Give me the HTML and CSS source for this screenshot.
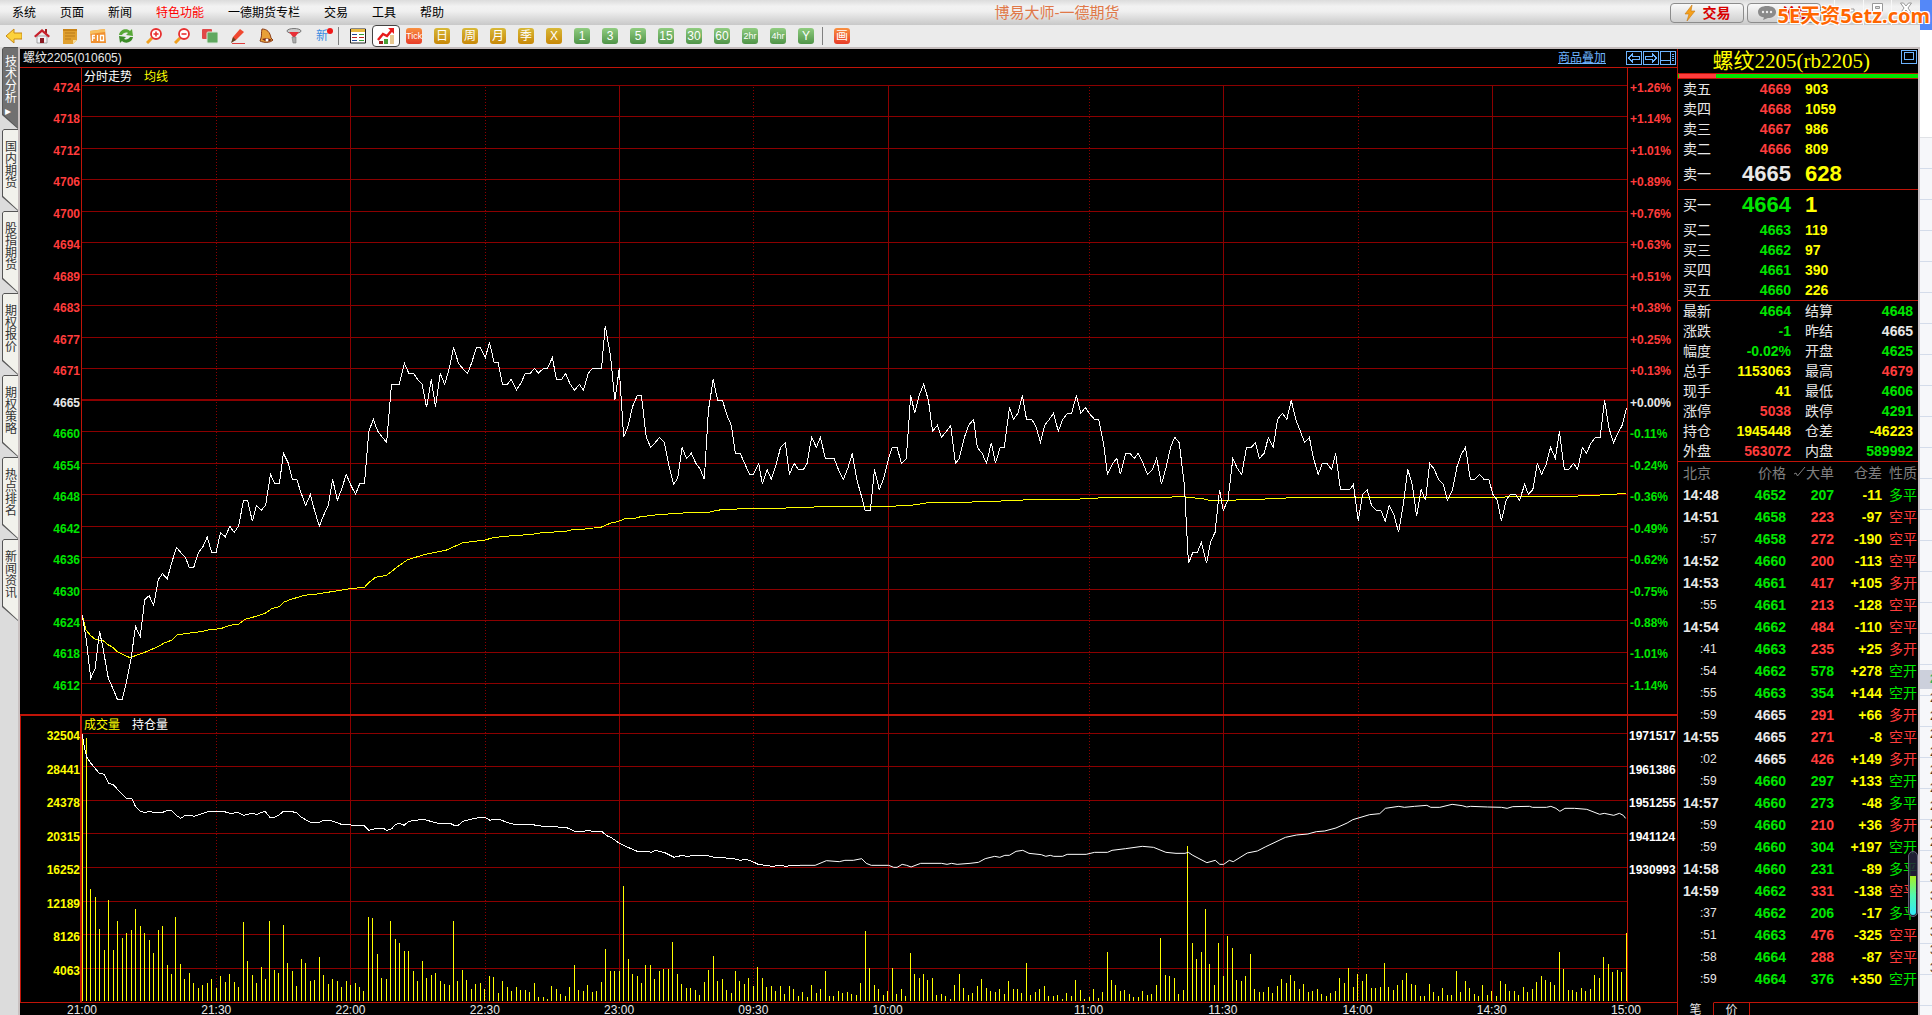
FILE: index.html
```html
<!DOCTYPE html>
<html lang="zh-CN">
<head>
<meta charset="utf-8">
<title>博易大师-一德期货</title>
<link rel="stylesheet" href="styles.css">
</head>
<body>
<div class="app">
  <header class="menubar">
    <nav class="menu">
      <button>系统</button><button>页面</button><button>新闻</button><button class="hot">特色功能</button><button>一德期货专栏</button><button>交易</button><button>工具</button><button>帮助</button>
    </nav>
    <h1 class="app-title">博易大师-一德期货</h1>
    <div class="quick">
      <button class="pill"><svg width="12" height="16" viewBox="0 0 12 16"><path d="M8 0 1 9h4L3 16l8-10H7z" fill="#f5a01c" stroke="#c87810" stroke-width=".6"/></svg>交易</button>
      <button class="pill"><svg width="18" height="14" viewBox="0 0 18 14"><path d="M9 0c5 0 9 2 9 6s-4 6-8 6l-5 2 1-2.500C2 11 0 9 0 6c0-4 4-6 9-6z" fill="#8a8a8a"/><g fill="#eee"><circle cx="5" cy="6" r="1.200"/><circle cx="9" cy="6" r="1.200"/><circle cx="13" cy="6" r="1.200"/></g></svg>论坛</button>
    </div>
    <div class="window-buttons">
      <button aria-label="最小化"><svg width="14" height="12" viewBox="0 0 14 12"><path d="M2 7h10v3H2z" fill="#fff" stroke="#999"/></svg></button>
      <button aria-label="还原"><svg width="14" height="12" viewBox="0 0 14 12"><path d="M1.500 1.500h10v8h-10z" fill="#fff" stroke="#999"/><path d="M4.500 4.500h4v2h-4z" fill="#ddd" stroke="#999"/></svg></button>
      <button aria-label="关闭"><svg width="14" height="12" viewBox="0 0 14 12"><path d="M1.500 1h3L7 4l2.500-3h3L9 6l3.500 5h-3L7 8l-2.500 3h-3L5 6z" fill="#fff" stroke="#999"/></svg></button>
    </div>
  </header>

  <div class="toolbar" role="toolbar">
    <button aria-label="后退"><svg width="16" height="16" viewBox="0 0 16 16"><path d="M0 8l8-7v4h8v6H8v4z" fill="#fcd23c" stroke="#c88a14"/></svg></button>
    <button aria-label="首页"><svg width="16" height="16" viewBox="0 0 16 16"><path d="M3 8h10v7H3z" fill="#f2f2f6" stroke="#888" stroke-width=".7"/><path d="M11 1h2v4h-2z" fill="#a02020"/><path d="M0 8l8-7 8 7-1.500 1.500L8 4 1.500 9.500z" fill="#c8202c"/><path d="M6 10h4v5H6z" fill="#8a1c24"/></svg></button>
    <button aria-label="记事"><svg width="16" height="16" viewBox="0 0 16 16"><path d="M1 1h14v11l-4 4H1z" fill="#e0a030"/><path d="M1 1h14v2H1z" fill="#c98418"/><path d="M3 5h10M3 8h10M3 11h6" stroke="#b87a1c"/><path d="M11 16v-4h4z" fill="#f8dc98"/></svg></button>
    <button aria-label="F10"><svg width="16" height="16" viewBox="0 0 16 16"><path d="M0 3l15-2 1 14H1z" fill="#f09030"/><path d="M0 3l15-2v3L0 6z" fill="#f8c060"/><path d="M2.500 13V7.500H5M2.500 10H5M7.500 7v6M10.500 7.500h3v5h-3z" fill="none" stroke="#fff" stroke-width="1.300"/></svg></button>
    <button aria-label="刷新"><svg width="16" height="16" viewBox="0 0 16 16"><path d="M1 7c1-6 8-7 11-4l2-2 1 7-7-1 2-2C8 4 5 5 4 7z" fill="#58a838"/><path d="M15 9c-1 6-8 7-11 4l-2 2-1-7 7 1-2 2c2 1 5 0 6-2z" fill="#3c8c28"/></svg></button>
    <button aria-label="放大"><svg width="16" height="16" viewBox="0 0 16 16"><path d="M6 10l-5 5" stroke="#f0a020" stroke-width="3"/><circle cx="10" cy="6" r="5" fill="#fff" stroke="#e83030" stroke-width="1.800"/><path d="M7.500 6h5M10 3.500v5" stroke="#e83030" stroke-width="1.600"/></svg></button>
    <button aria-label="缩小"><svg width="16" height="16" viewBox="0 0 16 16"><path d="M6 10l-5 5" stroke="#f0a020" stroke-width="3"/><circle cx="10" cy="6" r="5" fill="#fff" stroke="#e83030" stroke-width="1.800"/><path d="M7.500 6h5" stroke="#e83030" stroke-width="1.600"/></svg></button>
    <button aria-label="叠加"><svg width="16" height="16" viewBox="0 0 16 16"><rect x="0" y="1" width="10" height="10" rx="1" fill="#e04848"/><rect x="5" y="4" width="11" height="11" rx="1" fill="#60a860" stroke="#d8e8d8"/></svg></button>
    <button aria-label="画线"><svg width="16" height="16" viewBox="0 0 16 16"><path d="M3 9l7-8 4 3-8 8-4 1z" fill="#f04830"/><path d="M3 9l3 3-5 3z" fill="#684020"/><path d="M2 15.500h13" stroke="#e04040"/></svg></button>
    <button aria-label="预警"><svg width="16" height="16" viewBox="0 0 16 16"><path d="M4 1c5 0 8 3 9 9l2 2c-3 3-9 3-13 1l1-3c1-3 0-5 1-9z" fill="#e8a038" stroke="#8a3c18"/><path d="M4 11c3-1 7-1 10 1-3 2-7 2-10-1z" fill="#7a2818"/><circle cx="9" cy="12" r="1.500" fill="#fff"/></svg></button>
    <button aria-label="筛选"><svg width="16" height="16" viewBox="0 0 16 16"><ellipse cx="8" cy="3" rx="7" ry="2.500" fill="#ccc" stroke="#777"/><path d="M3 4h10l-4 5H7z" fill="#e83038"/><path d="M6 9h4v6H7z" fill="#aaa" stroke="#777" stroke-width=".6"/></svg></button>
    <button class="new-item">新<i></i></button>
    <span class="divider"></span>
    <button aria-label="报价"><svg width="16" height="16" viewBox="0 0 16 16"><path d="M.5 1h15v14H.5z" fill="#fff" stroke="#222"/><path d="M1 1h14v3H1z" fill="#e8b840"/><path d="M2 6.500h5M2 12.500h5" stroke="#204898"/><path d="M2 9.500h5" stroke="#c02020"/><path d="M9 6.500h5M9 12.500h5" stroke="#30a030"/><path d="M9 9.500h5" stroke="#c02020"/></svg></button>
    <button class="active" aria-label="分时"><svg width="18" height="18" viewBox="0 0 18 18"><path d="M2 14h4v3H2z" fill="#a02020"/><path d="M7 12h4v5H7z" fill="#48a038"/><path d="M13 8h4v9h-4z" fill="#e8c890"/><path d="M1 13l5-6 4 2 5-6" fill="none" stroke="#e81c1c" stroke-width="2.500"/><path d="M11 1h6v6z" fill="#e81c1c"/></svg></button>
    <button><b class="chip red narrow">Tick</b></button>
    <button><b class="chip gold">日</b></button>
    <button><b class="chip gold">周</b></button>
    <button><b class="chip gold">月</b></button>
    <button><b class="chip gold">季</b></button>
    <button><b class="chip gold">X</b></button>
    <button><b class="chip green">1</b></button>
    <button><b class="chip green">3</b></button>
    <button><b class="chip green">5</b></button>
    <button><b class="chip green">15</b></button>
    <button><b class="chip green">30</b></button>
    <button><b class="chip green">60</b></button>
    <button><b class="chip green narrow">2hr</b></button>
    <button><b class="chip green narrow">4hr</b></button>
    <button><b class="chip green">Y</b></button>
    <span class="divider"></span>
    <button><b class="chip red">画</b></button>
  </div>

  <div class="workspace">
    <nav class="rail">
      <button class="tab current"><span>技术分析</span><i>▸</i></button>
      <button class="tab"><span>国内期货</span></button>
      <button class="tab"><span>股指期货</span></button>
      <button class="tab"><span>期权报价</span></button>
      <button class="tab"><span>期权策略</span></button>
      <button class="tab"><span>热点排名</span></button>
      <button class="tab"><span>新闻资讯</span></button>
    </nav>

    <main class="chart">
      <div class="chart-head">
        <span>螺纹2205(010605)</span>
        <a href="#">商品叠加</a>
        <div class="head-icons">
          <button aria-label="前一品种"><svg width="16" height="14" viewBox="0 0 16 14"><path d="M.5.5h15v13H.5zM2.500 7l4-4v2.500h7v3h-7V11z"/></svg></button>
          <button aria-label="后一品种"><svg width="16" height="14" viewBox="0 0 16 14"><path d="M.5.5h15v13H.5zM13.500 7l-4-4v2.500h-7v3h7V11z"/></svg></button>
          <button aria-label="布局"><svg width="16" height="14" viewBox="0 0 16 14"><path d="M.5.5h15v13H.5zM10.500 1v12M1 9.500h9M12 3.500h2M12 5.500h2M12 7.500h2M12 9.500h2"/></svg></button>
        </div>
      </div>

      <div class="pane price">
        <ol class="axis left">
          <li>4724</li><li>4718</li><li>4712</li><li>4706</li><li>4700</li><li>4694</li><li>4689</li><li>4683</li><li>4677</li><li>4671</li><li class="w">4665</li><li class="g">4660</li><li class="g">4654</li><li class="g">4648</li><li class="g">4642</li><li class="g">4636</li><li class="g">4630</li><li class="g">4624</li><li class="g">4618</li><li class="g">4612</li>
        </ol>
        <div class="plot">
          <div class="legend"><span>分时走势</span><span class="y">均线</span></div>
          <svg viewBox="82 68 1545 646" preserveAspectRatio="none" shape-rendering="crispEdges">
            <path class="grid" d="M82 85.500H1627M82 116.500H1627M82 148.500H1627M82 179.500H1627M82 211.500H1627M82 242.500H1627M82 274.500H1627M82 305.500H1627M82 337.500H1627M82 368.500H1627M82 431.500H1627M82 463.500H1627M82 494.500H1627M82 526.500H1627M82 557.500H1627M82 589.500H1627M82 620.500H1627M82 652.500H1627M82 683.500H1627M350.500 85V716M619.500 85V716M888.500 85V716M1223.500 85V716M1492.500 85V716"/>
            <path class="grid base" d="M82 400H1627"/>
            <path class="grid dots" d="M216.500 87V716M485.500 87V716M753.500 87V716M1089.500 87V716M1358.500 87V716"/>
            <g transform="translate(60 300) scale(.3699 .33333)">
              <polyline class="avg" points="60,945 70,990 83,1007 95,1018 118,1023 131,1035 143,1042 155,1055 180,1069 190,1073 204,1067 229,1057 265,1040 280,1030 303,1020 318,1004 345,1000 380,995 405,989 435,986 458,976 483,973 500,958 530,949 556,939 572,926 592,920 606,906 625,898 660,886 695,882 740,874 785,866 823,862 835,848 853,832 883,826 915,798 940,779 985,764 1045,750 1065,740 1090,728 1150,720 1170,713 1215,708 1275,703 1305,698 1368,694 1385,689 1420,687 1465,681"/>
              <polyline class="last" points="60,945 70,1010 83,1135 95,1105 107,994 118,1055 131,1137 143,1165 155,1198 168,1198 180,1145 192,1078 204,979 217,1010 229,899 241,887 253,916 266,838 277,821 290,837 302,788 315,742 327,758 339,772 350,804 361,804 374,758 386,741 398,711 410,757 422,757 434,697 447,711 459,679 471,697 483,678 496,601 507,601 520,664 531,616 544,631 556,615 569,523 581,552 593,552 604,460 617,489 628,537 640,538 652,580 664,616 677,584 688,631 701,679 713,645 725,617 737,538 750,601 762,565 774,523 786,555 799,583 810,552 823,552 835,394 847,358 859,394 871,411 883,427 896,254 917,254 931,190 943,220 956,220 967,239 979,253 991,322 1004,238 1015,322 1028,221 1040,253 1052,207 1064,142 1077,189 1089,206 1102,220 1113,188 1126,142 1136,142 1150,173 1161,127 1174,189 1185,189 1196,253 1209,253 1220,238 1234,270 1246,250 1258,220 1271,220 1283,205 1293,220 1307,205 1318,205 1331,173 1342,238 1356,238 1367,221 1379,252 1391,271 1404,253 1415,271 1428,220 1440,205 1464,205 1474,78 1488,165 1500,301 1512,205"/>
            </g>
            <g transform="translate(600 300) scale(.3699 .33333)">
              <polyline class="avg" points="4,681 27,670 50,664 65,657 95,655 110,650 150,645 195,641 240,638 295,637 315,631 340,628 400,626 505,624 605,620 780,619 840,616 895,607 1010,606 1110,602 1160,599 1280,598 1365,593 1535,592 1567,589"/>
              <polyline class="last" points="52,205 64,411 76,378 88,320 101,286 112,286 125,411 137,442 149,428 161,412 174,427 185,490 199,553 210,535 222,443 234,475 247,460 259,490 271,508 282,538 293,332 306,238 318,301 331,301 343,345 355,376 366,460 379,460 391,490 404,523 415,523 429,490 439,553 452,509 463,538 477,490 488,443 501,428 512,523 525,490 536,508 550,508 560,490 572,412 585,442 596,412 609,475 633,475 645,510 658,538 670,505 682,460 694,538 706,585 717,631 731,631 742,508 755,569 767,535 779,480 790,442 803,442 815,490 828,476 840,286 851,340 863,285 875,253 888,301 899,394 912,376 923,412 936,395 948,376 961,490 971,476 985,412 997,375 1010,358 1020,442 1033,460 1045,490 1058,428 1069,490 1082,442 1093,442 1107,322 1118,358 1130,339 1142,286 1153,358 1167,358 1178,378 1191,427 1202,376 1214,359 1226,340 1239,394 1251,358 1263,341 1275,340 1288,286 1300,340 1312,322 1324,342 1337,358 1348,358 1361,428 1372,523 1385,492 1397,475 1407,523 1421,460 1432,460 1445,475 1455,460 1468,490 1480,523 1493,509 1505,475 1518,553"/>
            </g>
            <g transform="translate(1130 300) scale(.3699 .33333)">
              <polyline class="avg" points="133,589 150,591 200,597 215,601 283,601 295,598 368,597 440,593 950,592 1215,588 1290,584 1342,580"/>
              <polyline class="last" points="85,553 98,500 110,440 121,412 133,428 147,555 158,790 170,757 182,757 193,727 207,790 218,725 230,697 242,569 252,631 265,600 278,475 290,505 302,523 315,442 328,442 339,428 350,475 363,460 374,412 387,442 399,358 412,340 424,358 436,301 448,358 460,392 472,428 485,412 496,475 509,523 520,490 532,490 545,508 556,460 569,569 594,569 604,553 617,663 629,583 641,569 653,616 666,631 678,631 690,663 701,616 714,646 726,697 738,620 751,508 763,553 775,649 787,569 799,601 810,490 822,507 834,538 847,553 858,601 872,569 884,500 896,462 907,442 920,538 932,538 945,523 957,538 970,538 981,583 993,601 1004,663 1017,601 1028,583 1042,583 1053,601 1067,553 1077,583 1089,569 1101,490 1113,523 1125,493 1137,442 1150,475 1161,394 1174,508 1186,508 1199,490 1210,508 1223,442 1234,460 1246,430 1258,412 1271,412 1283,301 1295,385 1307,428 1319,400 1331,375 1342,325"/>
            </g>
          </svg>
        </div>
        <ol class="axis right">
          <li>+1.26%</li><li>+1.14%</li><li>+1.01%</li><li>+0.89%</li><li>+0.76%</li><li>+0.63%</li><li>+0.51%</li><li>+0.38%</li><li>+0.25%</li><li>+0.13%</li><li class="w">+0.00%</li><li class="g">-0.11%</li><li class="g">-0.24%</li><li class="g">-0.36%</li><li class="g">-0.49%</li><li class="g">-0.62%</li><li class="g">-0.75%</li><li class="g">-0.88%</li><li class="g">-1.01%</li><li class="g">-1.14%</li>
        </ol>
      </div>

      <div class="pane volume">
        <ol class="axis left">
          <li>32504</li><li>28441</li><li>24378</li><li>20315</li><li>16252</li><li>12189</li><li>8126</li><li>4063</li>
        </ol>
        <div class="plot">
          <div class="legend"><span class="y">成交量</span><span>持仓量</span></div>
          <svg viewBox="82 716 1545 286" preserveAspectRatio="none" shape-rendering="crispEdges">
            <path class="grid" d="M82 733.500H1627M82 766.500H1627M82 800.500H1627M82 833.500H1627M82 867.500H1627M82 901.500H1627M82 934.500H1627M82 968.500H1627M350.500 716V1002M619.500 716V1002M888.500 716V1002M1223.500 716V1002M1492.500 716V1002"/>
            <path class="grid dots" d="M216.500 717V1002M485.500 717V1002M753.500 717V1002M1089.500 717V1002M1358.500 717V1002"/>
            <path id="volume-bars" class="bars"/>
            <g transform="translate(20 700) scale(.5102 .33333)">
              <polyline class="last" points="122,103 126,140 131,172 138,188 155,219 165,223 174,250 183,254 200,283 209,295 219,295 226,318 236,334 245,338 253,334 262,337 280,337 289,331 297,331 307,347 315,355 324,346 334,346 342,349 358,340 372,334 398,334 412,340 428,338 438,346 455,340 464,343 480,334 490,352 498,352 507,346 516,334 530,334 542,338 552,352 569,367 586,367 595,361 608,361 630,373 675,378 684,391 700,385 712,385 719,391 728,387 736,373 744,370 753,376 762,364 790,358 820,370 843,370 851,376 859,376 868,364 880,359 900,353 912,352 921,361 930,358 939,358 960,370 970,373 1000,373 1025,379 1070,382 1088,394 1105,394 1114,391 1122,394 1140,394 1150,407 1160,414 1175,430 1190,441 1210,454 1230,454 1237,457 1246,451 1265,459 1282,472 1298,466 1307,469 1325,466 1345,466 1360,472 1395,475 1412,481 1420,478 1432,482 1447,493 1475,499 1490,496 1500,499 1515,496 1529,496"/>
            </g>
            <g transform="translate(800 700) scale(.5612 .33333)">
              <polyline class="last" points="0,496 27,496 47,482 70,485 80,481 95,481 110,476 118,490 127,496 158,496 167,502 173,502 182,493 190,496 198,501 215,490 252,490 262,493 270,490 280,493 303,490 318,487 330,476 347,469 356,472 365,466 373,466 385,454 397,451 408,460 430,464 438,469 446,466 452,469 468,469 476,463 510,463 525,457 548,457 556,451 580,446 610,439 630,442 652,457 670,460 686,460 692,457 700,466 725,488 740,481 748,493 755,493 765,481 772,485 797,459 815,453 830,440 865,412 885,405 905,402 920,395 935,393 955,384 975,369 985,359 1015,344 1033,341 1043,325 1067,319 1077,322 1095,319 1117,316 1124,322 1140,322 1162,313 1180,317 1188,321 1195,319 1225,321 1250,322 1260,325 1270,320 1300,319 1305,322 1330,322 1338,319 1347,325 1354,334 1363,325 1380,325 1402,328 1425,343 1433,340 1450,346 1460,340 1467,346 1471,355"/>
            </g>
          </svg>
        </div>
        <ol class="axis right">
          <li>1971517</li><li>1961386</li><li>1951255</li><li>1941124</li><li>1930993</li><li></li><li></li><li></li>
        </ol>
      </div>

      <div class="times">
        <span>21:00</span><span>21:30</span><span>22:00</span><span>22:30</span><span>23:00</span><span>09:30</span><span>10:00</span><span>11:00</span><span>11:30</span><span>14:00</span><span>14:30</span><span>15:00</span>
      </div>
    </main>

    <aside class="quote">
      <div class="quote-head">
        <h2>螺纹2205(rb2205)</h2>
        <button aria-label="窗口"><svg width="16" height="14" viewBox="0 0 16 14"><path d="M.5.5h15v13H.5zM3.500 2.500h9v7h-9z"/></svg></button>
      </div>
      <div class="ratio"><span></span></div>
      <table class="depth">
        <tr><th>卖五</th><td class="r">4669</td><td>903</td></tr>
        <tr><th>卖四</th><td class="r">4668</td><td>1059</td></tr>
        <tr><th>卖三</th><td class="r">4667</td><td>986</td></tr>
        <tr><th>卖二</th><td class="r">4666</td><td>809</td></tr>
        <tr class="best"><th>卖一</th><td class="w">4665</td><td>628</td></tr>
      </table>
      <table class="depth">
        <tr class="best"><th>买一</th><td class="g">4664</td><td>1</td></tr>
        <tr><th>买二</th><td class="g">4663</td><td>119</td></tr>
        <tr><th>买三</th><td class="g">4662</td><td>97</td></tr>
        <tr><th>买四</th><td class="g">4661</td><td>390</td></tr>
        <tr><th>买五</th><td class="g">4660</td><td>226</td></tr>
      </table>
      <table class="stats">
        <tr><th>最新</th><td class="g">4664</td><th>结算</th><td class="g">4648</td></tr>
        <tr><th>涨跌</th><td class="g">-1</td><th>昨结</th><td class="w">4665</td></tr>
        <tr><th>幅度</th><td class="g">-0.02%</td><th>开盘</th><td class="g">4625</td></tr>
        <tr><th>总手</th><td>1153063</td><th>最高</th><td class="r">4679</td></tr>
        <tr><th>现手</th><td>41</td><th>最低</th><td class="g">4606</td></tr>
        <tr><th>涨停</th><td class="r">5038</td><th>跌停</th><td class="g">4291</td></tr>
        <tr><th>持仓</th><td>1945448</td><th>仓差</th><td>-46223</td></tr>
        <tr><th>外盘</th><td class="r">563072</td><th>内盘</th><td class="g">589992</td></tr>
      </table>
      <table class="ticks">
        <thead><tr><th>北京</th><th>价格</th><th><svg width="12" height="12" viewBox="0 0 12 12"><path d="M0 8l2-1 1.500 3L11 1" fill="none" stroke="#808080"/></svg>大单</th><th>仓差</th><th>性质</th></tr></thead>
        <tbody>
        <tr><td>14:48</td><td class="g">4652</td><td class="g">207</td><td>-11</td><td class="g">多平</td></tr>
        <tr><td>14:51</td><td class="g">4658</td><td class="r">223</td><td>-97</td><td class="r">空平</td></tr>
        <tr><td class="s">:57</td><td class="g">4658</td><td class="r">272</td><td>-190</td><td class="r">空平</td></tr>
        <tr><td>14:52</td><td class="g">4660</td><td class="r">200</td><td>-113</td><td class="r">空平</td></tr>
        <tr><td>14:53</td><td class="g">4661</td><td class="r">417</td><td>+105</td><td class="r">多开</td></tr>
        <tr><td class="s">:55</td><td class="g">4661</td><td class="r">213</td><td>-128</td><td class="r">空平</td></tr>
        <tr><td>14:54</td><td class="g">4662</td><td class="r">484</td><td>-110</td><td class="r">空平</td></tr>
        <tr><td class="s">:41</td><td class="g">4663</td><td class="r">235</td><td>+25</td><td class="r">多开</td></tr>
        <tr><td class="s">:54</td><td class="g">4662</td><td class="g">578</td><td>+278</td><td class="g">空开</td></tr>
        <tr><td class="s">:55</td><td class="g">4663</td><td class="g">354</td><td>+144</td><td class="g">空开</td></tr>
        <tr><td class="s">:59</td><td class="w">4665</td><td class="r">291</td><td>+66</td><td class="r">多开</td></tr>
        <tr><td>14:55</td><td class="w">4665</td><td class="r">271</td><td>-8</td><td class="r">空平</td></tr>
        <tr><td class="s">:02</td><td class="w">4665</td><td class="r">426</td><td>+149</td><td class="r">多开</td></tr>
        <tr><td class="s">:59</td><td class="g">4660</td><td class="g">297</td><td>+133</td><td class="g">空开</td></tr>
        <tr><td>14:57</td><td class="g">4660</td><td class="g">273</td><td>-48</td><td class="g">多平</td></tr>
        <tr><td class="s">:59</td><td class="g">4660</td><td class="r">210</td><td>+36</td><td class="r">多开</td></tr>
        <tr><td class="s">:59</td><td class="g">4660</td><td class="g">304</td><td>+197</td><td class="g">空开</td></tr>
        <tr><td>14:58</td><td class="g">4660</td><td class="g">231</td><td>-89</td><td class="g">多平</td></tr>
        <tr><td>14:59</td><td class="g">4662</td><td class="r">331</td><td>-138</td><td class="r">空平</td></tr>
        <tr><td class="s">:37</td><td class="g">4662</td><td class="g">206</td><td>-17</td><td class="g">多平</td></tr>
        <tr><td class="s">:51</td><td class="g">4663</td><td class="r">476</td><td>-325</td><td class="r">空平</td></tr>
        <tr><td class="s">:58</td><td class="g">4664</td><td class="r">288</td><td>-87</td><td class="r">空平</td></tr>
        <tr><td class="s">:59</td><td class="g">4664</td><td class="g">376</td><td>+350</td><td class="g">空开</td></tr>
        </tbody>
      </table>
      <div class="quote-tabs"><button class="on">笔</button><button>价</button><span></span></div>
      <div class="meter"><span></span></div>
    </aside>
  </div>
</div>

<div class="behind">
  <div class="behind-title"></div>
  <div class="behind-page"></div>
  <div class="behind-rows">
    <b>2</b><span>2</span><span>2</span><span>2</span><span>2</span><span>2</span><span>2</span><span>2</span><span>2</span><span>2</span><span>3</span><span>3</span><span>3</span><span>3</span><span>3</span><span>3</span><span>3</span>
  </div>
</div>
<div class="watermark">5E天资5etz.com</div>
<script src="chart.js"></script>
</body>
</html>
```

FILE: styles.css
```css
* { box-sizing: border-box; }
body {
  margin: 0;
  height: 100vh;
  display: flex;
  overflow: hidden;
  background: #fff;
  font: 12px/15px "Liberation Sans", "Noto Sans CJK SC", sans-serif;
}
button {
  margin: 0;
  padding: 0;
  border: 0;
  background: none;
  font: inherit;
  color: inherit;
}
svg { display: block; }
ol { list-style: none; margin: 0; padding: 0; }
h1, h2 { margin: 0; font-weight: normal; }
table { border-collapse: collapse; table-layout: fixed; width: 100%; }
th, td { padding: 0; }

.y { color: #ff0; }
.r { color: #ff3c3c; }
.g { color: #00e600; }
.w { color: #e8e8e8; }

.app {
  flex: 1;
  min-width: 0;
  display: flex;
  flex-direction: column;
}

/* menu bar */
.menubar {
  height: 25px;
  flex: none;
  display: flex;
  align-items: center;
  background: linear-gradient(#dcdcdc, #f2f2f2 25%, #f0f0f0 45%, #c8c8c8);
}
.menu { display: flex; gap: 24px; padding: 2px 0 0 12px; }
.hot { color: #f00; }
.app-title {
  flex: 1;
  text-align: center;
  font-size: 15px;
  line-height: 20px;
  color: #e07848;
}
.quick { display: flex; gap: 3px; }
.pill {
  width: 74px;
  height: 20px;
  display: flex;
  align-items: center;
  justify-content: center;
  gap: 7px;
  border: 1px solid #8c8c8c;
  border-radius: 4px;
  background: linear-gradient(#fafafa, #cfcfcf);
  color: #d80000;
  font-size: 14px;
  line-height: 18px;
  font-weight: bold;
}
.window-buttons { display: flex; margin-left: 13px; width: 86px; height: 25px; }
.window-buttons button {
  flex: 1;
  display: flex;
  justify-content: center;
  padding-top: 2px;
  border-left: 1px solid #f8f8f8;
}

/* tool bar */
.toolbar {
  height: 24px;
  flex: none;
  display: flex;
  background: #ebebeb;
  border-bottom: 2px solid #c4bcbc;
}
.toolbar button {
  width: 28px;
  height: 22px;
  display: flex;
  align-items: center;
  justify-content: center;
}
.toolbar .active {
  background: #fff;
  border: 1px solid #444;
  border-radius: 4px;
}
.toolbar .divider {
  width: 8px;
  background: linear-gradient(#808080, #808080) 2px 2px / 1px 18px no-repeat;
}
.toolbar .new-item { position: relative; color: #3c8ce0; }
.new-item i {
  position: absolute;
  right: 3px;
  top: 3px;
  width: 6px;
  height: 6px;
  border-radius: 3px;
  background: #f01818;
}
.chip {
  width: 16px;
  height: 16px;
  border-radius: 3px;
  color: #fff;
  font: 12px/16px "Liberation Sans", "Noto Sans CJK SC", sans-serif;
  text-align: center;
}
.chip.narrow { font-size: 9px; }
.gold { background: linear-gradient(#d8b838, #c88808); }
.green { background: linear-gradient(#90cc80, #509448); }
.red { background: linear-gradient(#f89040, #e83c28); }

.workspace { flex: 1; min-height: 0; display: flex; background: #000; }

/* side tabs */
.rail {
  width: 20px;
  flex: none;
  margin-top: -2px;
  padding-left: 2px;
  background: #dcdcdc;
  border-right: 2px solid #c8c0c0;
}
.tab {
  width: 16px;
  height: 82px;
  display: flex;
  flex-direction: column;
  justify-content: flex-start;
  align-items: flex-start;
  padding: 12px 1px 0 3px;
  background: #555;
  color: #333;
  clip-path: polygon(0 2px, 2px 0, 100% 0, 100% 100%, 0 68px);
  position: relative;
  line-height: 12px;
}
.tab::before {
  content: "";
  position: absolute;
  inset: 1px 0 1px 1px;
  background: #f2f2ec;
  clip-path: polygon(0 1px, 1px 0, 100% 0, 100% 100%, 0 66px);
}
.tab span { position: relative; width: 12px; word-break: break-all; }
.tab i { position: relative; font: 12px/14px "DejaVu Sans", sans-serif; }
.tab.current { color: #fff; padding-top: 9px; }
.tab.current::before { background: #707070; }

/* chart */
.chart {
  flex: 1;
  min-width: 0;
  display: grid;
  grid-template-rows: 19px minmax(0, 648fr) minmax(0, 287fr) 12px;
  background: #000;
  color: #fff;
}
.chart-head {
  display: flex;
  align-items: center;
  padding-left: 3px;
  border-bottom: 1px solid #c01408;
  color: #e8e8e8;
}
.chart-head a { margin: 0 20px 0 auto; color: #6db4ff; }
.head-icons { display: flex; gap: 1px; padding-right: 1px; }
.head-icons svg, .quote-head svg { fill: none; stroke: #6db4ff; shape-rendering: crispEdges; }
.pane { display: grid; grid-template-columns: 62px minmax(0, 1fr) 50px; }
.price { border-bottom: 2px solid #c01408; }
.volume { border-bottom: 1px solid #c01408; }
.axis {
  display: flex;
  flex-direction: column;
  justify-content: space-between;
  font-weight: bold;
  color: #ff3c3c;
}
.axis li { height: 15px; }
.axis .g { color: #00e600; }
.axis .w { color: #e8e8e8; }
.axis.left { text-align: right; padding-right: 1px; border-right: 1px solid #c01408; }
.axis.right { padding-left: 2px; border-left: 1px solid #c01408; }
.price .axis { padding-top: 13px; padding-bottom: 20px; }
.volume .axis { padding-top: 13px; padding-bottom: 23px; }
.volume .axis.left { color: #ff0; border-left: 1px solid #c01408; border-right-width: 2px; padding-right: 0; }
.volume .axis.right { color: #fff; padding-left: 1px; }
.plot { position: relative; min-height: 0; }
.plot svg { width: 100%; height: 100%; }
.legend { position: absolute; left: 2px; top: 2px; display: flex; gap: 12px; }
.grid, .bars, .avg, .last { fill: none; vector-effect: non-scaling-stroke; }
.grid { stroke: #8b0000; }
.grid.base { stroke-width: 2px; }
.grid.dots { stroke-dasharray: 1 2; }
.bars { stroke: #ff0; }
.avg { stroke: #ff0; }
.last { stroke: #fff; }
.times {
  display: grid;
  grid-template-columns: repeat(6, minmax(0, 30fr)) minmax(0, 45fr) repeat(4, minmax(0, 30fr)) 0;
  padding: 0 51px 0 62px;
  color: #e8e8e8;
}
.times span { width: 32px; margin-left: -15px; }

/* quote panel */
.quote {
  width: 243px;
  flex: none;
  position: relative;
  display: flex;
  flex-direction: column;
  background: #000;
  border-left: 1px solid #c01408;
  border-right: 2px solid #c8c0c4;
}
.quote-head {
  height: 24px;
  display: flex;
  align-items: flex-start;
  justify-content: flex-end;
  gap: 31px;
  padding: 1px 1px 0 0;
}
.quote h2 { font: 21px/23px "Liberation Serif", "Noto Sans CJK SC", serif; color: #ff0; }
.ratio {
  height: 6px;
  padding: 0 1px;
  border: solid #c01408;
  border-width: 1px 0;
  background: #00e600;
}
.ratio span { display: block; width: 37px; height: 4px; background: #ff3c3c; }
.quote table { font-size: 14px; line-height: 20px; color: #ff0; }
.quote th { font-weight: normal; color: #e8e8e8; text-align: left; padding-left: 5px; }
.quote td { font-weight: bold; }
.quote td.r { color: #ff3c3c; }
.quote td.g { color: #00e600; }
.quote td.w { color: #e8e8e8; }
.depth, .stats { border-bottom: 1px solid #c01408; }
.depth tr, .stats tr { height: 20px; }
.depth th, .stats th:first-child { width: 48px; }
.depth td:nth-child(2), .stats td:nth-child(2) { width: 65px; text-align: right; }
.depth td:last-child { padding-left: 14px; }
.depth .best { height: 30px; }
.depth .best td { font-size: 22px; line-height: 30px; }
.stats th:nth-child(3) { padding-left: 14px; width: 60px; }
.stats td:last-child { text-align: right; padding-right: 5px; }
.ticks tr { height: 22px; }
.ticks th { color: #808080; }
.ticks th, .ticks td { text-align: right; padding: 0; white-space: nowrap; }
.ticks th:first-child, .ticks td:first-child { width: 48px; text-align: left; padding-left: 5px; }
.ticks td:first-child { color: #e8e8e8; }
.ticks td.s { font-size: 12px; font-weight: normal; padding-left: 22px; }
.ticks th:nth-child(2) { width: 60px; }
.ticks th:nth-child(3) { width: 48px; }
.ticks th:nth-child(4) { width: 48px; }
.ticks th:last-child, .ticks td:last-child { font-weight: normal; padding-right: 1px; }
.ticks svg { display: inline; }
.quote-tabs { margin-top: auto; height: 13px; display: flex; color: #e8e8e8; }
.quote-tabs button { width: 36px; height: 13px; overflow: hidden; border: solid #c01408; border-width: 1px 1px 0 0; line-height: 14px; }
.quote-tabs .on { border-top-color: transparent; }
.quote-tabs span { flex: 1; border-top: 1px solid #c01408; }
.meter {
  position: absolute;
  right: 0;
  bottom: 98px;
  width: 10px;
  height: 66px;
  padding: 24px 1px 1px;
  border: 1px solid #666478;
  border-radius: 5px;
  background: rgba(37, 35, 60, .85);
}
.meter span { display: block; height: 100%; border-radius: 0 0 3px 3px; background: linear-gradient(#a8f020, #50f8b0 50%, #30e8f8); }

/* window showing behind the right edge */
.behind { width: 12px; flex: none; display: flex; flex-direction: column; background: #f6f7fa; }
.behind-title { height: 30px; background: #5488f8; }
.behind-page { height: 108px; background: #fff; border-bottom: 1px solid #e0e2e6; }
.behind-rows {
  flex: 1;
  min-height: 0;
  padding-top: 532px;
  overflow: hidden;
  background: repeating-linear-gradient(transparent 0 30px, #d4dcea 30px 31px);
}
.behind-rows b, .behind-rows span { display: block; height: 18px; padding-left: 10px; overflow: hidden; line-height: 18px; color: #503010; }
.behind-rows b { height: 19px; background: #ccd0dc; color: #30b060; }
.watermark {
  position: absolute;
  right: 2px;
  top: 3px;
  font: bold 20px/25px "Noto Sans", "Noto Sans CJK SC", sans-serif;
  color: #f60;
  text-shadow: 1px 1px 0 #fff, -1px -1px 0 #fff, 1px -1px 0 #fff, -1px 1px 0 #fff;
}
```

FILE: chart.js
```js
// One entry per trading minute, 21:00 to 15:00; smaller numbers reach higher.
const FLOOR = 904;
const levels = [
  103,114,567,591,687,750,600,750,663,714,699,690,627,678,699,720,759,690,678,795,
  822,651,792,837,819,849,864,855,849,837,864,828,846,822,846,861,666,783,825,849,
  801,837,663,810,819,675,789,813,858,777,789,843,840,771,825,852,837,843,861,843,
  855,849,861,873,651,654,762,834,837,663,717,729,753,753,813,843,783,834,825,819,
  843,852,855,663,843,810,840,867,852,849,867,828,831,879,843,861,873,861,870,870,
  876,849,891,891,897,858,867,882,888,861,795,870,873,855,876,873,846,747,813,813,
  813,558,777,822,828,849,795,795,837,813,807,807,726,822,852,864,864,870,885,846,
  810,768,843,837,870,879,813,843,852,834,858,801,834,861,858,873,858,882,858,867,
  888,876,891,855,879,867,813,888,888,873,879,876,882,885,849,693,804,855,867,885,
  873,804,882,867,888,759,822,834,822,840,834,885,882,888,897,855,822,864,885,879,
  858,837,864,873,876,867,882,843,867,867,879,789,885,876,867,858,888,888,885,897,
  879,888,840,870,897,891,867,894,876,756,840,855,873,870,882,891,891,873,885,882,
  855,714,825,828,834,882,870,438,729,777,756,627,792,855,729,828,708,744,840,843,
  828,762,867,876,876,861,879,858,837,849,825,843,867,852,876,873,867,882,888,879,
  873,834,849,804,861,822,843,822,864,864,861,789,861,870,855,840,819,852,855,888,
  888,852,876,888,864,885,885,813,876,843,864,882,888,855,885,873,888,843,852,873,
  873,885,861,876,867,846,828,840,846,855,756,807,870,870,876,864,873,867,825,834,
  771,792,816,810,816,699
];
const bars = levels.map((level, minute) => {
  const x = Math.floor(82 + minute * 4.476) + 0.5;
  return `M${x} 1001v-${Math.round((FLOOR - level) / 3)}`;
});
document.getElementById('volume-bars').setAttribute('d', bars.join(''));
```
